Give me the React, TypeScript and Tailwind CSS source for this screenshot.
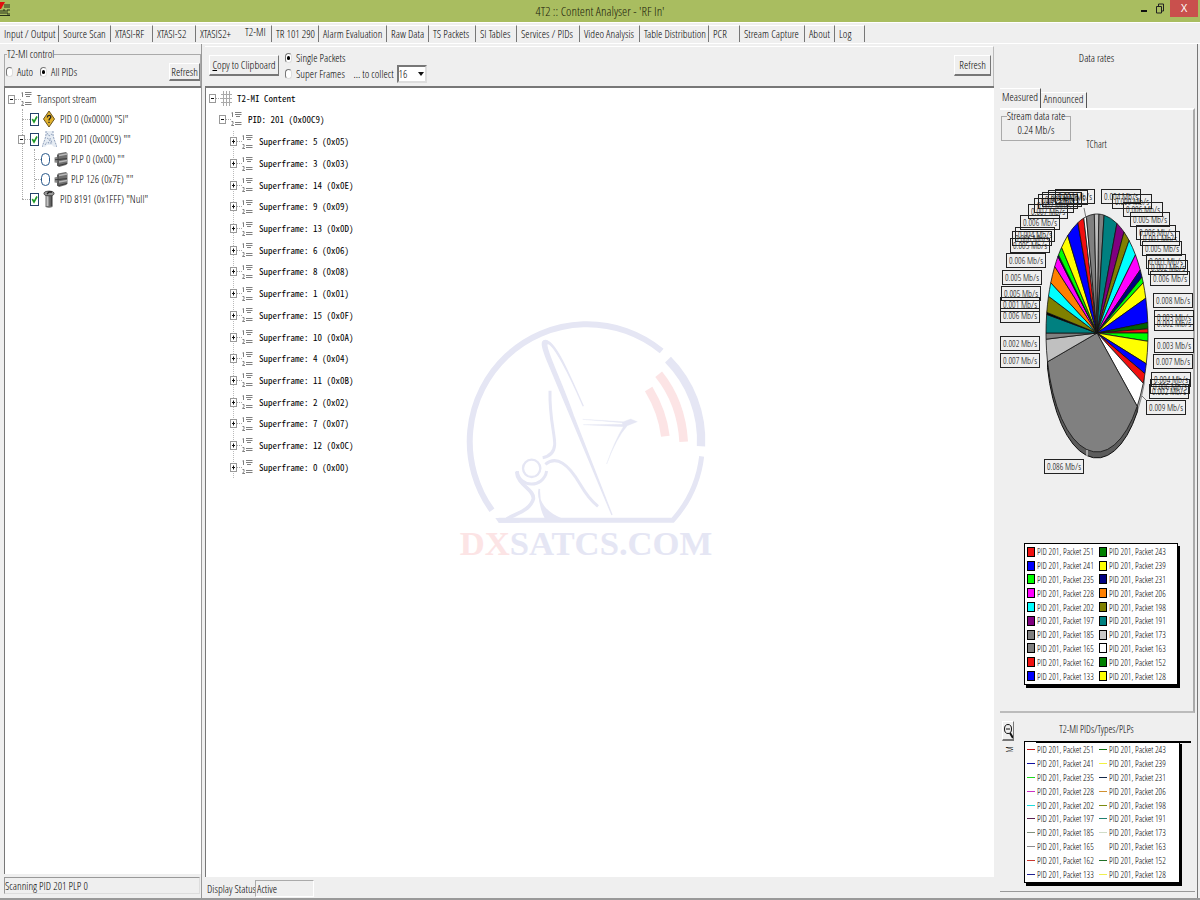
import { useState } from "react";
import type { ReactNode } from "react";

const tabs = [
  { label: "Input / Output", width: "w-[59px]" },
  { label: "Source Scan", width: "w-[52px]" },
  { label: "XTASI-RF", width: "w-[42px]" },
  { label: "XTASI-S2", width: "w-[43px]" },
  { label: "XTASIS2+", width: "w-[45px]" },
  { label: "T2-MI", width: "w-[31px]" },
  { label: "TR 101 290", width: "w-[47px]" },
  { label: "Alarm Evaluation", width: "w-[68px]" },
  { label: "Raw Data", width: "w-[42px]" },
  { label: "TS Packets", width: "w-[47px]" },
  { label: "SI Tables", width: "w-[41px]" },
  { label: "Services / PIDs", width: "w-[63px]" },
  { label: "Video Analysis", width: "w-[60px]" },
  { label: "Table Distribution", width: "w-[69px]" },
  { label: "PCR", width: "w-[31px]" },
  { label: "Stream Capture", width: "w-[65px]" },
  { label: "About", width: "w-[30px]" },
  { label: "Log", width: "w-[30px]" },
];

const superframes = [5, 3, 14, 9, 13, 6, 8, 1, 15, 10, 4, 11, 2, 7, 12, 0];

const packets = [
  { id: 251, swatch: "bg-[#f01010]", line: "bg-[#c01818]" },
  { id: 243, swatch: "bg-[#008000]", line: "bg-[#107010]" },
  { id: 241, swatch: "bg-[#0000ff]", line: "bg-[#1010a0]" },
  { id: 239, swatch: "bg-[#ffff00]", line: "bg-[#f2f240]" },
  { id: 235, swatch: "bg-[#00ff00]", line: "bg-[#20d820]" },
  { id: 231, swatch: "bg-[#000080]", line: "bg-[#14294a]" },
  { id: 228, swatch: "bg-[#ff00ff]", line: "bg-[#cc30c4]" },
  { id: 206, swatch: "bg-[#ff8000]", line: "bg-[#d09030]" },
  { id: 202, swatch: "bg-[#00ffff]", line: "bg-[#20dcdc]" },
  { id: 198, swatch: "bg-[#808000]", line: "bg-[#7c8c10]" },
  { id: 197, swatch: "bg-[#800080]", line: "bg-[#5a2050]" },
  { id: 191, swatch: "bg-[#008080]", line: "bg-[#208070]" },
  { id: 185, swatch: "bg-[#808080]", line: "bg-[#80907c]" },
  { id: 173, swatch: "bg-[#c8c8c8]", line: "bg-[#d0dcc8]" },
  { id: 165, swatch: "bg-[#808080]", line: "bg-[#8c8c90]" },
  { id: 163, swatch: "bg-white", line: "bg-white" },
  { id: 162, swatch: "bg-[#f01010]", line: "bg-[#c83830]" },
  { id: 152, swatch: "bg-[#008000]", line: "bg-[#207028]" },
  { id: 133, swatch: "bg-[#0000ff]", line: "bg-[#202090]" },
  { id: 128, swatch: "bg-[#ffff00]", line: "bg-[#eef050]" },
];

// [end angle in degrees clockwise from the top, colour]
const slices: [number, string][] = [
  [8, "#808080"],
  [23, "#008080"],
  [32, "#800080"],
  [39, "#808000"],
  [49, "#00ffff"],
  [58, "#ff00ff"],
  [62, "#000080"],
  [65, "#00ff00"],
  [73, "#ffff00"],
  [85, "#0000ff"],
  [88, "#006400"],
  [90, "#f01010"],
  [94, "#00ff00"],
  [105, "#ffff00"],
  [110, "#0000ff"],
  [115, "#f01010"],
  [128, "#ffffff"],
  [256, "#808080"],
  [267, "#c0c0c0"],
  [270, "#808080"],
  [279, "#008080"],
  [280, "#000000"],
  [288, "#808000"],
  [295, "#00ffff"],
  [304, "#ff8000"],
  [310, "#ff00ff"],
  [311, "#000080"],
  [316, "#00ff00"],
  [325, "#ffff00"],
  [338, "#0000ff"],
  [345, "#f01010"],
  [348, "#ffffff"],
  [357, "#808080"],
  [362, "#c0c0c0"],
];

const marks: [number, number, string][] = [
  [0, 153, "0.007"],
  [0, 136, "0.002"],
  [0, 108, "0.006"],
  [0, 97, "0.001"],
  [1, 86, "0.005"],
  [2, 70, "0.005"],
  [6, 53, "0.006"],
  [10, 38, "0.005"],
  [12, 31, "0.006"],
  [15, 27, "0.004"],
  [20, 15, "0.006"],
  [28, 4, "0.007"],
  [34, -2, "0.002"],
  [38, -6, "0.005"],
  [42, -8, "0.003"],
  [48, -10, "0.008"],
  [55, -11, "0.004"],
  [101, -11, "0.004"],
  [112, -6, "0.009"],
  [123, 2, "0.006"],
  [130, 12, "0.005"],
  [136, 25, "0.006"],
  [140, 31, "0.001"],
  [142, 41, "0.005"],
  [146, 54, "0.001"],
  [148, 60, "0.002"],
  [150, 71, "0.006"],
  [153, 93, "0.008"],
  [154, 110, "0.003"],
  [154, 116, "0.002"],
  [154, 138, "0.003"],
  [153, 154, "0.007"],
  [151, 172, "0.004"],
  [150, 179, "0.006"],
  [149, 184, "0.002"],
  [146, 200, "0.009"],
  [44, 259, "0.086"],
];

const CX = 97;
const CY = 133;
const RX = 51;
const RY = 119;
const DEPTH = 6;

function rim(deg: number, drop = 0) {
  const a = (deg * Math.PI) / 180;
  return `${CX + RX * Math.sin(a)} ${CY + drop - RY * Math.cos(a)}`;
}

function PieChart() {
  return (
    <svg className="block" width="195" height="292" viewBox="0 -15 195 292" role="img" aria-label="Data rates by packet">
      <path
        d={`M${rim(112)} L${rim(112, DEPTH)} A${RX} ${RY} 0 0 1 ${rim(128, DEPTH)} L${rim(128)} Z`}
        fill="#bbb"
        stroke="#555"
        strokeWidth="0.6"
      />
      <path
        d={`M${rim(128)} L${rim(128, DEPTH)} A${RX} ${RY} 0 0 1 ${rim(256, DEPTH)} L${rim(256)} Z`}
        fill="#5c5c5c"
        stroke="#111"
        strokeWidth="1"
      />
      {slices.map(([end, fill], i) => {
        const start = i === 0 ? 2 : slices[i - 1][0];
        return (
          <path
            key={i}
            d={`M${CX} ${CY} L${rim(start)} A${RX} ${RY} 0 0 1 ${rim(end)} Z`}
            fill={fill}
            stroke="#111"
            strokeWidth="0.8"
          />
        );
      })}
      <path d="M84 8 L86 18 M142 196 L147 201" stroke="#777" strokeWidth="1" />
      <path d="M87 250V256" stroke="#eee" strokeWidth="1" />
      {marks.map(([x, y, rate], i) => (
        <g key={i}>
          <rect x={x + 0.5} y={y + 0.5} width="39" height="14" fill="none" stroke="#222" strokeWidth="1" />
          <text x={x + 20} y={y + 11} textAnchor="middle" fontSize="9" fill="black">
            {rate} Mb/s
          </text>
        </g>
      ))}
    </svg>
  );
}

function Expander({ open = false }: { open?: boolean }) {
  return (
    <button type="button" aria-label={open ? "Collapse" : "Expand"} className="relative z-10 h-[9px] w-[7px] shrink-0 bg-white">
      <svg width="7" height="9" viewBox="0 0 7 9" fill="none">
        <rect x="0.5" y="0.5" width="6" height="8" stroke="#999" />
        <path d={open ? "M2 4.5H5" : "M2 4.5H5M3.5 2.5V6.5"} stroke="#111" />
      </svg>
    </button>
  );
}

function ListIcon() {
  return (
    <svg className="shrink-0" width="11" height="16" viewBox="0 0 11 16" fill="none" stroke="#808080">
      <path d="M0.5 2L1.5 1.5V6M0.5 10.5H2V12.5L0.5 14.5H3" />
      <path d="M4 1.5H10.5M4 3.5H10.5M5 5.5H9M4 11.5H10.5M4 13.5H10.5" />
    </svg>
  );
}

function GridIcon() {
  return (
    <svg className="shrink-0" width="11" height="15" viewBox="0 0 11 15" stroke="#aaa">
      <path d="M2.5 0V15M5.5 0V15M8.5 0V15M0 3.5H11M0 7.5H11M0 11.5H11" />
    </svg>
  );
}

function WarningIcon() {
  return (
    <svg className="shrink-0" width="12" height="18" viewBox="0 0 12 18">
      <path d="M6 1L11.5 9L6 17L0.5 9Z" fill="#e2b22c" stroke="#6b5520" />
      <path d="M4.3 7.5C4.3 4.8 7.8 4.8 7.8 7C7.8 8.6 6 8.6 6 10.4M6 11.8V13" fill="none" stroke="#222" strokeWidth="1.3" />
    </svg>
  );
}

function TowerIcon() {
  return (
    <svg className="shrink-0" width="15" height="18" viewBox="0 0 15 18">
      <path d="M4 1H11L12 8L15 17H12L10 15H5L3 17H0L3 8Z" fill="#e6ecf3" />
      <path d="M4 1V5L3 9L0 17M11 1V5L12 9L15 17M5 3L7 6L10 4M5 8L8 10L6 13L10 13L8 8M3 15L5 12" fill="none" stroke="#8799b5" strokeWidth="0.9" strokeDasharray="2 1" />
    </svg>
  );
}

function PipeIcon() {
  return (
    <svg className="shrink-0" width="14" height="17" viewBox="0 0 14 17">
      <path d="M4 2.5L12 1L13.5 2.5V12.5L12 14L5 16L3 14.5V4Z" fill="#707070" />
      <path d="M0.5 6.5L4 5.5V12L0.5 11.5Z" fill="#8a8a8a" />
      <path d="M5 4.5L13 3M5 11L13 9.5" stroke="#b9b9b9" strokeWidth="1.3" />
      <path d="M1 8.8L13 7.6M4.5 14.5L13 12.5" stroke="#3a3a3a" />
      <path d="M4 4V15" stroke="#444" />
    </svg>
  );
}

function BinIcon() {
  return (
    <svg className="shrink-0" width="12" height="18" viewBox="0 0 12 18">
      <path d="M1 2L2.5 6V17Q6 18.5 9.5 17V6L11 2Z" fill="#6d6d6d" />
      <path d="M4.5 6V16" stroke="#c4c4c4" strokeWidth="2" />
      <path d="M8.5 6V16" stroke="#444" strokeWidth="1.5" />
      <ellipse cx="6" cy="3.5" rx="5" ry="2.3" fill="#999" stroke="#444" />
      <path d="M4 4L6 2H9" stroke="#222" strokeWidth="1.3" fill="none" />
    </svg>
  );
}

function Check({ icon, label }: { icon: ReactNode; label: string }) {
  return (
    <label className="flex items-center">
      <span className="relative mr-0.5 h-[13px] w-[9px]">
        <input type="checkbox" defaultChecked className="peer block h-[13px] w-[9px] appearance-none border border-[#24426b] bg-white" />
        <svg className="pointer-events-none absolute inset-0 hidden peer-checked:block" width="9" height="13" viewBox="0 0 9 13" fill="none">
          <path d="M2.3 6L4 9L7 3.5" stroke="#1d9a28" strokeWidth="1.6" />
        </svg>
      </span>
      <span className="flex w-4 justify-center">{icon}</span>
      <span className="ml-[3px]">{label}</span>
    </label>
  );
}

function Radio({ name, label, checked = false }: { name: string; label: string; checked?: boolean }) {
  return (
    <label className="flex items-center gap-1 whitespace-nowrap">
      <span className="relative h-[10px] w-[7px]">
        <input
          type="radio"
          name={name}
          defaultChecked={checked}
          className="peer block h-[10px] w-[7px] appearance-none rounded-full border border-[#ddd] border-t-[#777] border-l-[#777] bg-white"
        />
        <span className="pointer-events-none absolute top-[3px] left-[2px] hidden h-1 w-[3px] rounded-full bg-black peer-checked:block" />
      </span>
      {label}
    </label>
  );
}

function Plp({ label }: { label: string }) {
  return (
    <li className="flex h-5 items-center">
      <span className="w-1.5 border-t border-dotted border-[#aaa]" />
      <label className="flex items-center">
        <input type="radio" name="plp" className="h-[13px] w-[9px] appearance-none rounded-full border border-[#2b5a8c] bg-white checked:bg-[#2b5a8c]" />
        <span className="mr-[3px] ml-1">
          <PipeIcon />
        </span>
        {label}
      </label>
    </li>
  );
}

function PidTree() {
  return (
    <div className="flex-1 border-t-2 border-l border-[#777] bg-white pt-px pl-[3px]">
      <div className="flex h-5 items-center">
        <Expander open />
        <span className="w-1.5 border-t border-dotted border-[#aaa]" />
        <ListIcon />
        <span className="ml-[5px]">Transport stream</span>
      </div>
      <ul className="ml-[14px]">
        <li className="relative flex h-5 items-center">
          <span className="absolute top-0 left-0 h-[90px] border-l border-dotted border-[#aaa]" />
          <span className="w-2 border-t border-dotted border-[#aaa]" />
          <Check icon={<WarningIcon />} label={'PID 0 (0x0000) "SI"'} />
        </li>
        <li>
          <div className="flex h-5 items-center">
            <span className="-ml-1 flex">
              <Expander open />
            </span>
            <span className="w-[5px] border-t border-dotted border-[#aaa]" />
            <Check icon={<TowerIcon />} label={'PID 201 (0x00C9) ""'} />
          </div>
          <ul className="ml-[12px] border-l border-dotted border-[#aaa]">
            <Plp label={'PLP 0 (0x00) ""'} />
            <Plp label={'PLP 126 (0x7E) ""'} />
          </ul>
        </li>
        <li className="flex h-5 items-center">
          <span className="w-2 border-t border-dotted border-[#aaa]" />
          <Check icon={<BinIcon />} label={'PID 8191 (0x1FFF) "Null"'} />
        </li>
      </ul>
    </div>
  );
}

function Watermark() {
  return (
    <svg
      aria-hidden="true"
      className="pointer-events-none absolute top-[221px] left-[234px]"
      width="290"
      height="260"
      viewBox="0 0 870 780"
      fill="none"
      stroke="#e5e6f4"
    >
      <path d="M156 604A352 352 0 0 1 665 126" strokeWidth="18" />
      <path d="M684 152A345 345 0 0 1 783 412" strokeWidth="25" />
      <path d="M785 442A350 350 0 0 1 698 634H176" strokeWidth="15" />
      <path d="M166 627H225L240 641H176Z" fill="#e5e6f4" stroke="none" />
      <path d="M516 618L320 150C308 118 300 95 316 94C345 94 385 190 430 292C390 200 340 100 322 104C310 112 360 205 400 320Z" fill="#e5e6f4" strokeWidth="4" />
      <path d="M330 245C328 330 346 380 344 408Q341 440 308 446" strokeWidth="9" />
      <circle cx="275" cy="478" r="26" strokeWidth="7" />
      <path d="M232 486C236 536 310 540 320 486M316 466C350 438 385 465 420 525Q446 570 474 592" strokeWidth="9" />
      <path d="M230 488C232 530 284 540 280 570C270 604 232 612 200 630" strokeWidth="11" />
      <path d="M298 540C290 580 320 612 364 630H318Q296 590 298 540Z" fill="#e5e6f4" strokeWidth="5" />
      <path d="M428 331L550 338L572 330L592 338L562 350Q530 385 500 465Q524 395 550 353L430 347L548 346L546 341Z" fill="#e5e6f4" strokeWidth="1" />
      <path d="M626 240Q668 310 676 382" stroke="#fce4e5" strokeWidth="26" />
      <path d="M656 196Q724 280 731 398" stroke="#fce4e5" strokeWidth="26" />
      <text x="438" y="738" textAnchor="middle" fontSize="104" fontWeight="bold" stroke="none" fill="#e5e6f4" className="font-['Liberation_Serif',serif]">
        <tspan fill="#fce4e5">DX</tspan>SATCS.COM
      </text>
    </svg>
  );
}

function ContentTree() {
  return (
    <div className="relative flex-1 border-t-2 border-l border-[#777] bg-white pl-[3px] font-['Noto_Sans_Mono_CJK_SC','Noto_Sans_Mono_CJK_JP','Liberation_Mono',monospace] text-[9px] leading-none">
      <div className="flex h-5 items-center">
        <Expander open />
        <span className="w-[5px] border-t border-dotted border-[#aaa]" />
        <GridIcon />
        <span className="ml-[5px]">T2-MI Content</span>
      </div>
      <div className="ml-[10px] flex h-[22px] items-center">
        <Expander open />
        <span className="w-[5px] border-t border-dotted border-[#aaa]" />
        <ListIcon />
        <span className="ml-[6px]">PID: 201 (0x00C9)</span>
      </div>
      <ul className="mt-px ml-[24px] grid h-[347px] auto-rows-fr border-l border-dotted border-[#bbb]">
        {superframes.map((n) => (
          <li key={n} className="-ml-1 flex items-center">
            <Expander />
            <span className="w-[5px] border-t border-dotted border-[#aaa]" />
            <ListIcon />
            <span className="ml-[6px]">
              Superframe: {n} (0x{n.toString(16).toUpperCase().padStart(2, "0")})
            </span>
          </li>
        ))}
      </ul>
      <Watermark />
    </div>
  );
}

function Legend({ lines = false }: { lines?: boolean }) {
  return (
    <ul className="mr-[15px] ml-6 grid h-[142px] auto-rows-fr grid-cols-[72px_1fr] border border-black bg-white py-px pl-[2px] text-[9px] leading-none shadow-[2px_3px_0_black]">
      {packets.map((p) => (
        <li key={p.id} className="flex items-center gap-0.5 whitespace-nowrap">
          {lines ? (
            <span className={`h-px w-2 shrink-0 ${p.line}`} />
          ) : (
            <span className={`h-[10px] w-2 shrink-0 border border-black ${p.swatch}`} />
          )}
          PID 201, Packet {p.id}
        </li>
      ))}
    </ul>
  );
}

const raised = "border border-white border-r-[#777] border-b-[#777] border-b-2 bg-[#efefef] whitespace-nowrap";

export default function App() {
  const [tab, setTab] = useState("T2-MI");

  return (
    <div className="flex min-h-screen flex-col border-b-2 border-[#999] bg-[#efefef] font-['Open_Sans_Condensed_Light','Roboto_Condensed','Liberation_Sans',sans-serif] text-[11px] leading-3 text-black">
      <header className="flex h-[22px] items-start bg-[#a9bd60]">
        <svg className="shrink-0" width="11" height="17" viewBox="0 0 11 17">
          <path d="M0 2L5 2L1 9H0Z" fill="#e01010" />
          <path d="M5 4V8M7 4V8M9 4V8M1 10V14M3 14V10H5V14M7 10V14H10M7 10H10" stroke="#26301a" fill="none" />
          <path d="M0 15.5H10" stroke="#26301a" />
        </svg>
        <h1 className="flex-1 pl-[53px] text-center text-[13px] leading-[22px] text-[#1d210c]">4T2 :: Content Analyser - 'RF In'</h1>
        <button type="button" aria-label="Minimize" className="flex h-[17px] w-4 items-center justify-center">
          <svg width="6" height="10" viewBox="0 0 6 10">
            <path d="M0 7H6" stroke="#111" strokeWidth="2" />
          </svg>
        </button>
        <button type="button" aria-label="Restore" className="flex h-[17px] w-4 items-center justify-center">
          <svg width="8" height="11" viewBox="0 0 8 11" fill="none" stroke="#222">
            <path d="M0.5 3.5H5.5V10H0.5ZM2.5 3V1H7.5V8H6" />
          </svg>
        </button>
        <button type="button" aria-label="Close" className="mr-0.5 ml-0.5 h-[17px] w-7 bg-[#c9504d] font-['Liberation_Sans',sans-serif] text-[10px] text-white">
          X
        </button>
      </header>

      <nav className="flex h-[22px] items-center border-t border-b border-white">
        {tabs.map((t) => (
          <button
            key={t.label}
            type="button"
            onClick={() => setTab(t.label)}
            className={`${t.width} h-[17px] shrink-0 border-t border-white pl-1 text-left whitespace-nowrap ${
              t.label === "XTASIS2+" ? "" : "border-r border-r-[#777]"
            } ${t.label === tab ? "pb-1" : ""}`}
          >
            {t.label}
          </button>
        ))}
      </nav>

      <div className="flex flex-1">
        <aside className="flex w-[202px] shrink-0 flex-col border-r border-[#999] pt-1 pl-1">
          <fieldset className="border border-b-0 border-[#aaa] pt-[3px] pb-[5px]">
            <legend className="ml-0.5">T2-MI control</legend>
            <div className="flex items-center gap-[7px] pl-px">
              <Radio name="pids" label="Auto" />
              <Radio name="pids" label="All PIDs" checked />
              <button type="button" className={`${raised} ml-auto h-[18px] px-px`}>
                Refresh
              </button>
            </div>
          </fieldset>
          <PidTree />
          <p className="mt-[3px] mr-px mb-1 h-[17px] border border-[#ddd] border-t-[#999] border-l-[#999] leading-4">Scanning PID 201 PLP 0</p>
        </aside>

        <main className="flex flex-1 flex-col pt-0.5 pl-[3px]">
          <div className="flex h-10 items-center border-t border-r border-white border-r-[#bbb] pr-0.5 pb-0.5 pl-1">
            <button type="button" className={`${raised} h-[21px] w-[70px]`}>
              <span className="underline">C</span>opy to Clipboard
            </button>
            <div className="ml-[6px] flex flex-col gap-1">
              <Radio name="mode" label="Single Packets" checked />
              <Radio name="mode" label="Super Frames" />
            </div>
            <label htmlFor="collect" className="mt-4 ml-2">
              ... to collect
            </label>
            <span className="relative mt-4 ml-[3px]">
              <select id="collect" defaultValue="16" className="block h-[18px] w-[30px] appearance-none border-2 border-[#ddd] border-t-[#777] border-l-[#777] bg-white">
                <option>8</option>
                <option>16</option>
                <option>32</option>
              </select>
              <svg className="pointer-events-none absolute top-[7px] right-[3px]" width="6" height="4" viewBox="0 0 6 4">
                <path d="M0 0H6L3 4Z" fill="#111" />
              </svg>
            </span>
            <button type="button" className={`${raised} ml-auto h-[21px] px-1`}>
              Refresh
            </button>
          </div>
          <ContentTree />
          <div className="flex h-[21px] items-center pt-0.5">
            <label htmlFor="status" className="ml-0.5">
              Display Status
            </label>
            <input id="status" readOnly value="Active" className="-ml-px h-[17px] w-[59px] border border-white border-t-[#aaa] border-l-[#aaa] pl-px" />
          </div>
        </main>

        <section className="mr-0.5 flex w-[204px] shrink-0 flex-col border-r border-[#777] pl-1.5">
          <h2 className="pt-2 pr-1 text-center">Data rates</h2>
          <div className="mt-6 flex items-end">
            <button type="button" className="h-5 w-[41px] border-t border-r border-white border-r-[#555] pb-1">
              Measured
            </button>
            <button type="button" className="h-4 w-[46px] border-t border-r border-white border-r-[#555] pb-1">
              Announced
            </button>
          </div>
          <div className="mr-0.5 border-t-2 border-r-2 border-b-2 border-white border-r-[#aaa] border-b-[#bbb]">
            <fieldset className="ml-px w-[70px] border border-[#aaa] pb-1 text-center">
              <legend className="mx-auto whitespace-nowrap">Stream data rate</legend>
              <div className="pt-0.5">0.24 Mb/s</div>
            </fieldset>
            <h3 className="text-center text-[10px] leading-[6px]">TChart</h3>
            <div className="mt-[38px]">
              <PieChart />
            </div>
            <div className="pt-[66px] pb-[26px]">
              <Legend />
            </div>
          </div>
          <div className="mt-0.5 mr-0.5 flex-1">
            <div className="flex items-end">
              <div className="flex w-4 flex-col items-center">
                <button type="button" aria-label="Zoom out" className={`${raised} mt-1.5 h-5 w-3`}>
                  <svg width="10" height="16" viewBox="0 0 10 16" fill="none" stroke="#111">
                    <ellipse cx="5" cy="6" rx="3.5" ry="4.5" />
                    <path d="M3 6H7" />
                    <path d="M7 10L10 15" strokeWidth="2" />
                  </svg>
                </button>
              </div>
              <h3 className="mb-1.5 flex-1 pr-[18px] text-center text-[10px]">T2-MI PIDs/Types/PLPs</h3>
            </div>
            <div className="relative">
              <span className="absolute top-1 left-1.5 -rotate-90 text-[9px] leading-none">M</span>
              <span className="absolute top-0 right-1 left-9 z-10 h-0.5 bg-black" />
              <Legend lines />
            </div>
            <div className="mt-2 border-t border-[#999]" />
          </div>
        </section>
      </div>
    </div>
  );
}
